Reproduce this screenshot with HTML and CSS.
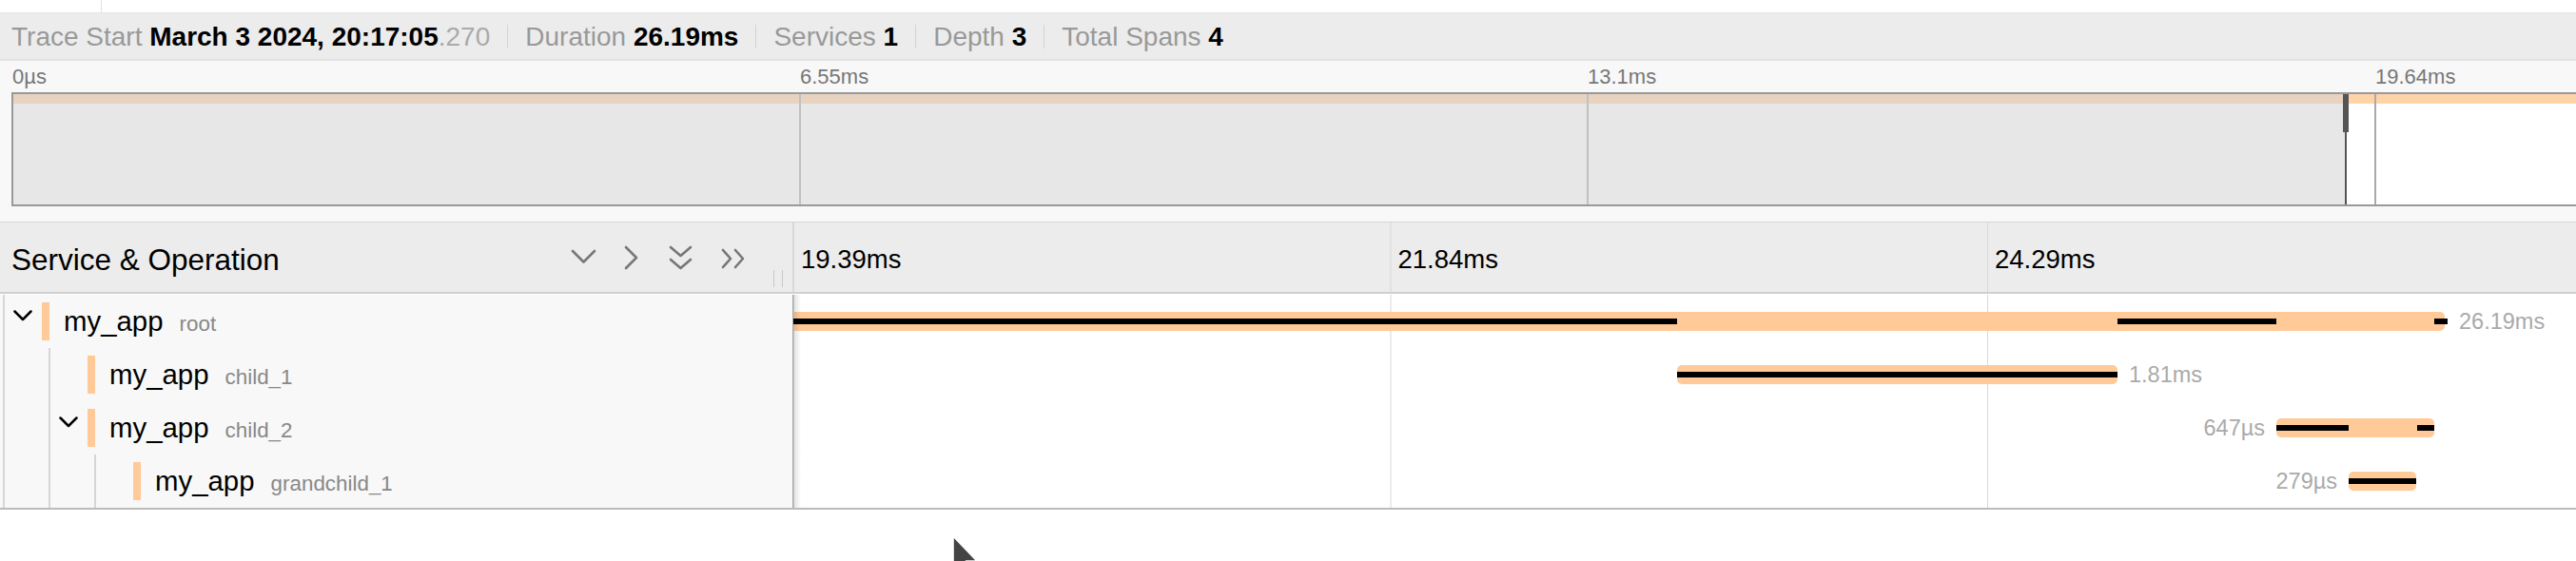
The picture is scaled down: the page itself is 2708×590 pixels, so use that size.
FILE: index.html
```html
<!DOCTYPE html>
<html lang="en">
<head>
<meta charset="utf-8">
<title>Trace timeline</title>
<link rel="stylesheet" href="styles.css">
</head>
<body>
<div class="page">
  <div class="topstrip"><div class="tab"></div></div>

  <div class="stats">
    <div class="stat">Trace Start <b>March 3 2024, 20:17:05</b><span class="ms">.270</span></div>
    <div class="stat">Duration <b>26.19ms</b></div>
    <div class="stat">Services <b>1</b></div>
    <div class="stat">Depth <b>3</b></div>
    <div class="stat">Total Spans <b>4</b></div>
  </div>

  <div class="mm-ticks">
    <div class="mm-label">0µs</div>
    <div class="mm-label">6.55ms</div>
    <div class="mm-label">13.1ms</div>
    <div class="mm-label">19.64ms</div>
  </div>
  <div class="mm-wrap">
    <div class="mm-canvas">
      <div class="mm-strip"></div>
      <div class="mm-lines"><div></div><div></div><div></div><div></div></div>
      <div class="mm-unsel"></div>
      <div class="mm-handle"></div>
    </div>
  </div>

  <div class="timeline">
    <div class="tl-header">
      <div class="tl-left">
        <span class="tl-title">Service &amp; Operation</span>
        <svg class="tl-icons" width="195" height="40" viewBox="0 0 195 40" fill="none" stroke="#777" stroke-width="2.6" stroke-linecap="round" stroke-linejoin="round">
          <polyline points="7,13 18.5,24.5 30,13"/>
          <polyline points="63,9 74,20 63,31"/>
          <polyline points="110,9 120.5,18 131,9"/>
          <polyline points="110,22 120.5,31 131,22"/>
          <polyline points="165,12 173,21 165,30"/>
          <polyline points="178,12 186,21 178,30"/>
        </svg>
        <div class="tl-handle"></div>
      </div>
      <div class="tl-right">
        <div class="tl-tick">19.39ms</div>
        <div class="tl-tick">21.84ms</div>
        <div class="tl-tick">24.29ms</div>
        <div class="tl-tick"></div>
      </div>
    </div>

    <div class="rows">
      <div class="row">
        <div class="row-left">
          <div class="toggle"><svg class="chev" width="20" height="12" viewBox="0 0 20 12"><polyline points="1.5,1.5 10,10 18.5,1.5"/></svg></div>
          <div class="svc-bar"></div>
          <div class="names"><span class="svc">my_app</span><span class="op">root</span></div>
        </div>
        <div class="row-right">
          <div class="bar" style="left:-12px;width:1748px"></div>
          <div class="seg" style="left:0;width:929px"></div>
          <div class="seg" style="left:1392px;width:167px"></div>
          <div class="seg" style="left:1725px;width:14px"></div>
          <div class="lbl" style="left:1751px">26.19ms</div>
        </div>
      </div>

      <div class="row">
        <div class="row-left">
          <div class="guide"></div>
          <div class="toggle"></div>
          <div class="svc-bar"></div>
          <div class="names"><span class="svc">my_app</span><span class="op">child_1</span></div>
        </div>
        <div class="row-right">
          <div class="bar" style="left:929px;width:463px"></div>
          <div class="seg" style="left:929px;width:463px"></div>
          <div class="lbl" style="left:1404px">1.81ms</div>
        </div>
      </div>

      <div class="row">
        <div class="row-left">
          <div class="guide"></div>
          <div class="toggle"><svg class="chev" width="20" height="12" viewBox="0 0 20 12"><polyline points="1.5,1.5 10,10 18.5,1.5"/></svg></div>
          <div class="svc-bar"></div>
          <div class="names"><span class="svc">my_app</span><span class="op">child_2</span></div>
        </div>
        <div class="row-right">
          <div class="bar" style="left:1559px;width:166px"></div>
          <div class="seg" style="left:1559px;width:76px"></div>
          <div class="seg" style="left:1707px;width:18px"></div>
          <div class="lbl lbl-left" style="left:1547px">647µs</div>
        </div>
      </div>

      <div class="row">
        <div class="row-left">
          <div class="guide"></div>
          <div class="guide"></div>
          <div class="toggle"></div>
          <div class="svc-bar"></div>
          <div class="names"><span class="svc">my_app</span><span class="op">grandchild_1</span></div>
        </div>
        <div class="row-right">
          <div class="bar" style="left:1635px;width:71px"></div>
          <div class="seg" style="left:1635px;width:71px"></div>
          <div class="lbl lbl-left" style="left:1623px">279µs</div>
        </div>
      </div>
    </div>
  </div>

  <svg class="cursor" width="32" height="46" viewBox="0 0 32 46">
    <path d="M2 2 V38 L10.5 30 L16 42 L21 40 L15.5 28 H27 Z" fill="#444" stroke="#fff" stroke-width="1.6" stroke-linejoin="round"/>
  </svg>
</div>
</body>
</html>
```

FILE: styles.css
```css
html {
  overflow: hidden;
}

html, body {
  margin: 0;
  padding: 0;
  background: #fff;
}

body {
  font-family: "Liberation Sans", Arial, Helvetica, sans-serif;
  color: #000;
}

.page {
  position: relative;
  width: 3344px;
  min-height: 590px;
}

/* top strip */
.topstrip {
  display: flex;
  height: 13px;
  border-bottom: 1px solid #e4e4e4;
}
.tab {
  width: 106px;
  border-right: 1px solid #e0e0e0;
}

/* stats header */
.stats {
  display: flex;
  align-items: center;
  height: 48px;
  padding-left: 12px;
  background: #ececec;
  border-bottom: 2px solid #e2e2e2;
  font-size: 28px;
  color: #999;
  white-space: nowrap;
}
.stat {
  padding: 0 18px;
  line-height: 25px;
}
.stat:first-child {
  padding-left: 0;
}
.stat + .stat {
  border-left: 1px solid #d4d4d4;
}
.stat b {
  color: #000;
  font-weight: bold;
}
.stat .ms {
  color: #aaa;
}

/* minimap */
.mm-ticks {
  display: grid;
  grid-template-columns: repeat(4, 828px);
  align-items: center;
  height: 33px;
  padding-left: 12px;
  background: #f8f8f8;
  font-size: 22px;
  color: #777;
}
.mm-label {
  padding-left: 1px;
}
.mm-wrap {
  background: #f8f8f8;
  padding: 0 16px 16px 12px;
}
.mm-canvas {
  position: relative;
  width: 3312px;
  height: 116px;
  border: 2px solid #999;
  background: #fff;
  overflow: hidden;
}
.mm-strip {
  height: 10px;
  background: #ffd3a8;
}
.mm-lines {
  position: absolute;
  inset: 0;
  display: grid;
  grid-template-columns: repeat(4, 1fr);
}
.mm-lines div {
  border-right: 2px solid #aaa;
}
.mm-lines div:last-child {
  border-right: none;
}
.mm-unsel {
  position: absolute;
  left: 0;
  top: 0;
  bottom: 0;
  width: 2452px;
  background: rgba(212, 212, 212, 0.55);
}
.mm-handle {
  position: absolute;
  left: 2449px;
  top: 0;
  width: 6px;
  height: 40px;
  background: #555;
}
.mm-handle::after {
  content: "";
  position: absolute;
  left: 2px;
  top: 40px;
  width: 2px;
  height: 76px;
  background: #555;
}

/* timeline */
.timeline {
  border-top: 1px solid #d6d6d6;
}
.tl-header {
  display: flex;
  height: 73px;
  background: #ececec;
  border-bottom: 2px solid #cfcfcf;
}
.tl-left {
  flex: none;
  width: 834px;
  box-sizing: border-box;
  display: flex;
  align-items: center;
  padding: 0 10px 0 12px;
  border-right: 1px solid #d8d8d8;
}
.tl-title {
  font-size: 31.5px;
  padding-top: 5px;
  white-space: nowrap;
}
.tl-icons {
  margin-left: auto;
  margin-right: 23px;
  flex: none;
}
.tl-handle {
  align-self: flex-end;
  margin-bottom: 5px;
  width: 10px;
  height: 18px;
  box-sizing: border-box;
  border-left: 1px solid #c8c8c8;
  border-right: 1px solid #c8c8c8;
}
.tl-right {
  flex: 1;
  display: grid;
  grid-template-columns: repeat(4, 1fr);
  background-image: linear-gradient(90deg, #d8d8d8 1px, transparent 1px);
  background-size: 25% 100%;
}
.tl-tick {
  display: flex;
  align-items: center;
  padding: 5px 0 0 8px;
  font-size: 27.5px;
  white-space: nowrap;
}

.rows {
  padding-top: 1px;
  border-bottom: 2px solid #bbb;
}
.row {
  display: flex;
  height: 56px;
}
.row-left {
  flex: none;
  width: 834px;
  box-sizing: border-box;
  display: flex;
  align-items: center;
  padding-left: 3px;
  background: #f8f8f8;
  border-right: 1px solid #aaa;
}
.guide {
  flex: none;
  align-self: stretch;
  width: 48px;
  box-sizing: border-box;
  border-left: 2px solid #d6d6d6;
}
.toggle {
  flex: none;
  align-self: stretch;
  width: 41px;
  box-sizing: border-box;
  border-left: 2px solid #d6d6d6;
}
.chev {
  display: block;
  margin: 16px 0 0 9px;
  fill: none;
  stroke: #000;
  stroke-width: 2.5;
  stroke-linecap: round;
  stroke-linejoin: round;
}
.svc-bar {
  flex: none;
  width: 8px;
  height: 40px;
  background: #ffca98;
}
.names {
  margin-left: 15px;
  white-space: nowrap;
}
.svc {
  font-size: 29.4px;
  color: #000;
}
.op {
  margin-left: 17px;
  font-size: 22.4px;
  color: #888;
}

.row-right {
  position: relative;
  flex: 1;
  overflow: hidden;
  background-color: #fff;
  background-image: linear-gradient(90deg, #d8d8d8 1px, transparent 1px);
  background-size: 25% 100%;
}
.row-right::before {
  content: "";
  position: absolute;
  left: 0;
  top: 0;
  bottom: 0;
  width: 8px;
  z-index: 2;
  background: linear-gradient(90deg, rgba(0, 0, 0, 0.12), rgba(0, 0, 0, 0));
}
.bar {
  position: absolute;
  top: 18px;
  height: 20px;
  border-radius: 5px;
  background: #ffca98;
}
.seg {
  position: absolute;
  top: 25px;
  height: 6px;
  background: #000;
}
.lbl {
  position: absolute;
  top: 0;
  line-height: 56px;
  font-size: 23.5px;
  color: #aaa;
  white-space: nowrap;
}
.lbl-left {
  transform: translateX(-100%);
}

.cursor {
  position: absolute;
  left: 1000px;
  top: 562px;
}
```
